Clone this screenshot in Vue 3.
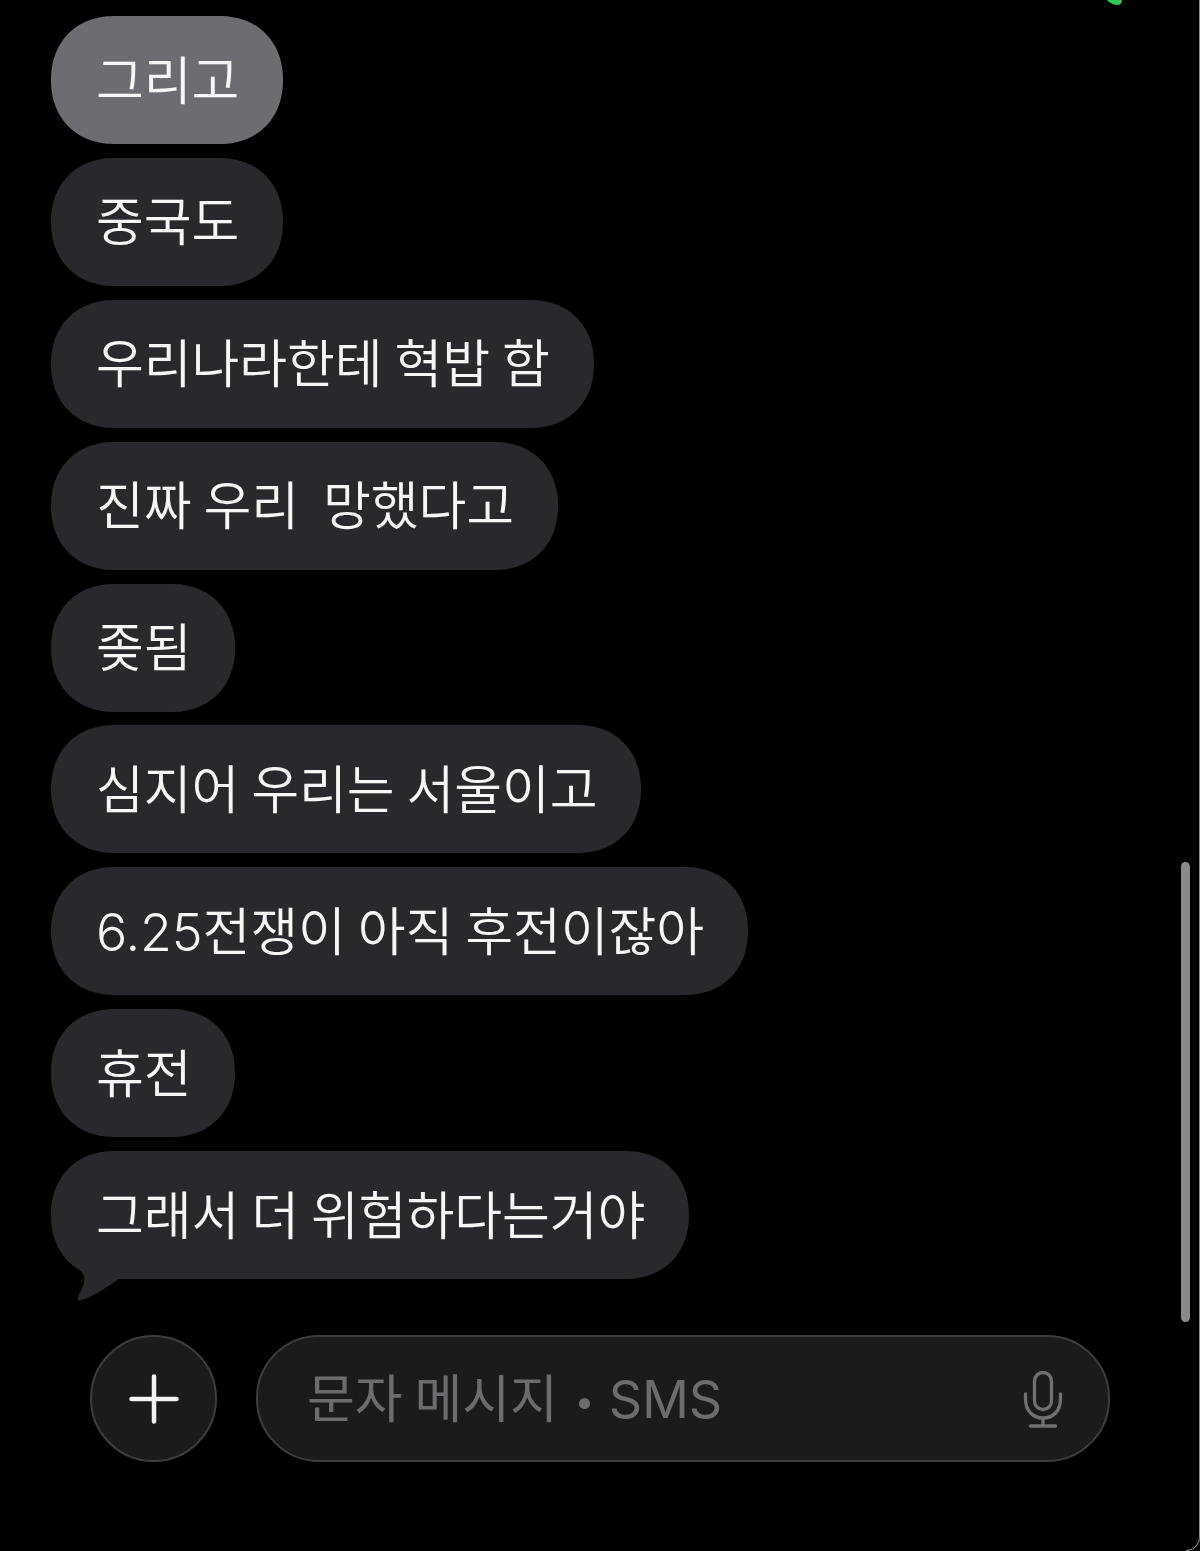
<script setup>
const messages = [
  { text: '그리고', selected: true },
  { text: '중국도' },
  { text: '우리나라한테 혁밥 함' },
  { text: '진짜 우리  망했다고' },
  { text: '좆됨' },
  { text: '심지어 우리는 서울이고' },
  { text: '6.25전쟁이 아직 후전이잖아' },
  { text: '휴전' },
  { text: '그래서 더 위험하다는거야', tail: true },
]
</script>

<template>
  <div class="screen">
    <div class="notch"></div>
    <div class="thread">
      <div
        v-for="m in messages"
        :key="m.text"
        class="bubble"
        :class="{ selected: m.selected }"
      >
        <span class="text">{{ m.text }}</span>
        <svg v-if="m.tail" class="tail" width="80" height="62" viewBox="0 0 80 62">
          <path d="M9 10C17 20 25 26 29 30C33 34 34 38 33 43C32 48 29 52 27 57C26 60 27 61 30 60C39 58 54 49 69 38L79 10Z" fill="#29292d" />
        </svg>
      </div>
    </div>
    <div class="composer">
      <div class="plus">
        <svg width="50" height="50" viewBox="0 0 50 50">
          <path d="M25 2.500V47.500M2.500 25H47.500" stroke="#f2f2f2" stroke-width="4.500" stroke-linecap="round" fill="none" />
        </svg>
      </div>
      <div class="field">
        <span class="placeholder">문자 메시지<span class="dot"></span>SMS</span>
        <svg class="mic" width="40" height="60" viewBox="0 0 40 60">
          <rect x="11.500" y="3.500" width="17" height="37" rx="8.500" fill="none" stroke="#707070" stroke-width="3.300" />
          <path d="M2.500 25V30C2.500 42 10 49 20 49C30 49 37.500 42 37.500 30V25M20 49V57M7.500 57H32.500" fill="none" stroke="#707070" stroke-width="3.300" stroke-linecap="round" />
        </svg>
      </div>
    </div>
    <div class="scrollbar"></div>
    <div class="edge"></div>
  </div>
</template>

<style scoped>
.screen {
  position: relative;
  box-sizing: border-box;
  width: 1200px;
  height: 1551px;
  overflow: hidden;
  padding-top: 16px;
  background: #000;
  font-family: Inter, "Noto Sans CJK KR", "Noto Sans", sans-serif;
  font-weight: 350;
  letter-spacing: -0.1px;
  word-spacing: -2.500px;
}
.notch {
  position: absolute;
  top: -6px;
  left: 1106px;
  width: 16px;
  height: 11px;
  border-radius: 0 0 8px 8px;
  background: #35c759;
  transform: skewX(30deg);
}
.thread {
  display: flex;
  flex-direction: column;
  align-items: flex-start;
  gap: 13.875px;
  padding-left: 51px;
}
.bubble {
  position: relative;
  display: flex;
  align-items: center;
  height: 128px;
  padding: 0 44px 0 45px;
  border-radius: 64px;
  corner-shape: superellipse(1.12);
  background: #29292d;
  color: #f6f6f6;
  font-size: 52px;
  white-space: pre;
}
.bubble.selected {
  background: #6c6c72;
}
.text {
  position: relative;
  top: -3px;
}
.tail {
  position: absolute;
  left: 0;
  top: 89px;
  display: block;
}
.composer {
  display: flex;
  align-items: center;
  gap: 39px;
  margin-top: 56px;
  padding-left: 90px;
}
.plus {
  display: flex;
  align-items: center;
  justify-content: center;
  box-sizing: border-box;
  width: 127px;
  height: 127px;
  border: 2px solid #3e3e3e;
  border-radius: 50%;
  background: #1b1b1d;
}
.field {
  display: flex;
  align-items: center;
  justify-content: space-between;
  box-sizing: border-box;
  width: 854px;
  height: 127px;
  padding: 0 45px 0 49px;
  border: 2px solid #3e3e3e;
  border-radius: 63px;
  background: #1b1b1d;
}
.placeholder {
  position: relative;
  top: -3px;
  color: #6c6c70;
  font-size: 52px;
  font-weight: 400;
  white-space: pre;
}
.dot {
  display: inline-block;
  width: 11px;
  height: 11px;
  margin: 0 19px 9px 21px;
  border-radius: 50%;
  background: #6c6c70;
}
.scrollbar {
  position: absolute;
  left: 1181px;
  top: 862px;
  width: 9px;
  height: 460px;
  border-radius: 5px;
  background: #8a8a8a;
}
.edge {
  position: absolute;
  top: 0;
  right: 0;
  bottom: 0;
  width: 14px;
  border-right: 1px solid #8c8c8c;
  border-bottom: 1px solid #8c8c8c;
  border-bottom-right-radius: 14px;
  box-sizing: border-box;
}
</style>
